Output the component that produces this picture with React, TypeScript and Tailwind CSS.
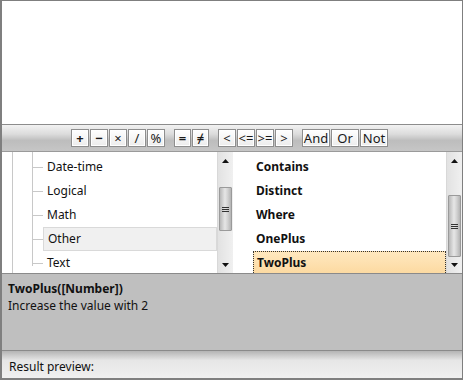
import React from "react";

const FONT = "font-['Segoe_UI','Noto_Sans',sans-serif]";

const OPS: { label: string; w: string; bold?: boolean }[][] = [
  [
    { label: "+", w: "w-[18px]", bold: true },
    { label: "−", w: "w-[18px]", bold: true },
    { label: "×", w: "w-[18px]" },
    { label: "/", w: "w-[18px]" },
    { label: "%", w: "w-[18px]" },
  ],
  [
    { label: "=", w: "w-[17px]", bold: true },
    { label: "≠", w: "w-[17px]", bold: true },
  ],
  [
    { label: "<", w: "w-[18px]" },
    { label: "<=", w: "w-[18px]" },
    { label: ">=", w: "w-[18px]" },
    { label: ">", w: "w-[18px]" },
  ],
  [
    { label: "And", w: "w-[28px]" },
    { label: "Or", w: "w-[28px]" },
    { label: "Not", w: "w-[28px]" },
  ],
];

const CATEGORIES = ["Date-time", "Logical", "Math", "Other", "Text"];
const FUNCTIONS = ["Contains", "Distinct", "Where", "OnePlus", "TwoPlus"];

function OpButton({ label, w, bold }: { label: string; w: string; bold?: boolean }) {
  return (
    <button
      className={`${w} h-[18px] flex items-center justify-center border border-[#8e8e8e] bg-[linear-gradient(to_bottom,#ffffff,#ececec)] shadow-[inset_0_0_0_1px_#ffffff] text-[13px] leading-none text-[#1a1a1a] ${
        bold ? "font-bold" : ""
      }`}
    >
      {label}
    </button>
  );
}

function ScrollBar({ thumbTop, thumbHeight }: { thumbTop: number; thumbHeight: number }) {
  return (
    <div className="relative w-[16px] h-full bg-[linear-gradient(to_right,#e2e2e2,#f0f0f0)] border-l border-[#d8d8d8]">
      <div className="flex h-[17px] items-center justify-center">
        <svg width="7" height="4" viewBox="0 0 7 4">
          <path d="M0 4 L3.5 0 L7 4 Z" fill="#111" />
        </svg>
      </div>
      <div
        className="absolute left-[1px] right-[1px] flex items-center justify-center rounded-[1px] border border-[#9a9a9a] bg-[linear-gradient(to_right,#b8b8b8,#e6e6e6_45%,#d2d2d2_70%,#b4b4b4)]"
        style={{ top: thumbTop, height: thumbHeight }}
      >
        <div className="flex flex-col gap-[1px]">
          <div className="h-px w-[7px] bg-[#333]" />
          <div className="h-px w-[7px] bg-[#333]" />
          <div className="h-px w-[7px] bg-[#333]" />
        </div>
      </div>
      <div className="absolute bottom-0 left-0 right-0 flex h-[17px] items-center justify-center">
        <svg width="7" height="4" viewBox="0 0 7 4">
          <path d="M0 0 L3.5 4 L7 0 Z" fill="#111" />
        </svg>
      </div>
    </div>
  );
}

export default function App() {
  return (
    <div
      className={`w-[463px] h-[380px] flex flex-col border border-l-2 border-b-2 border-[#7f7f7f] bg-white text-[12px] text-[#111] ${FONT}`}
    >
      <div className="h-[123px] bg-white" />

      <div className="h-[27px] border-t border-[#8c8c8c] bg-[linear-gradient(to_bottom,#f2f2f2_0%,#dcdcdc_35%,#bdbdbd_60%,#c6c6c6_100%)] flex items-center pl-[69px] gap-[9px]">
        {OPS.map((group, i) => (
          <div key={i} className="flex gap-px">
            {group.map((op) => (
              <OpButton key={op.label} {...op} />
            ))}
          </div>
        ))}
      </div>

      <div className="h-[122px] flex border-t border-[#9a9a9a]">
        <div className="relative w-[215px] overflow-hidden">
          <div className="absolute left-[10px] top-0 bottom-0 w-px bg-[#c8c8c8]" />
          <div className="absolute left-[30px] top-0 h-[114px] w-px bg-[#c8c8c8]" />
          <div className="flex flex-col pt-[3px]">
            {CATEGORIES.map((c) => (
              <div key={c} className="relative flex h-[24px] items-center">
                <div className="absolute left-[30px] top-1/2 h-px w-[11px] bg-[#c8c8c8]" />
                <div
                  className={`ml-[41px] flex h-[24px] flex-1 items-center pl-[4px] ${
                    c === "Other" ? "border border-[#d9d9d9] bg-[#f0f0f0]" : ""
                  }`}
                >
                  {c}
                </div>
              </div>
            ))}
          </div>
        </div>
        <ScrollBar thumbTop={35} thumbHeight={44} />

        <div className="flex-1 pl-[20px] overflow-hidden">
          <div className="flex flex-col pt-[3px]">
            {FUNCTIONS.map((f) => (
              <div
                key={f}
                className={`flex h-[24px] items-center pl-[3px] font-bold ${
                  f === "TwoPlus"
                    ? "border border-dotted border-[#333] bg-[linear-gradient(to_bottom,#ffe8bf,#fcd9a0)]"
                    : ""
                }`}
              >
                {f}
              </div>
            ))}
          </div>
        </div>
        <ScrollBar thumbTop={43} thumbHeight={62} />
      </div>

      <div className="h-[77px] border-t border-[#8a8a8a] bg-[#bfbfbf] px-[6px] pt-[6px] text-[12px] leading-[17px]">
        <div className="font-bold">TwoPlus([Number])</div>
        <div>Increase the value with 2</div>
      </div>

      <div className="flex-1 border-t border-[#8a8a8a] bg-[linear-gradient(to_bottom,#b4b4b4_0%,#e6e6e6_35%,#f0f0f0_100%)] flex items-end pl-[7px] pb-[2px]">
        Result preview:
      </div>
    </div>
  );
}
